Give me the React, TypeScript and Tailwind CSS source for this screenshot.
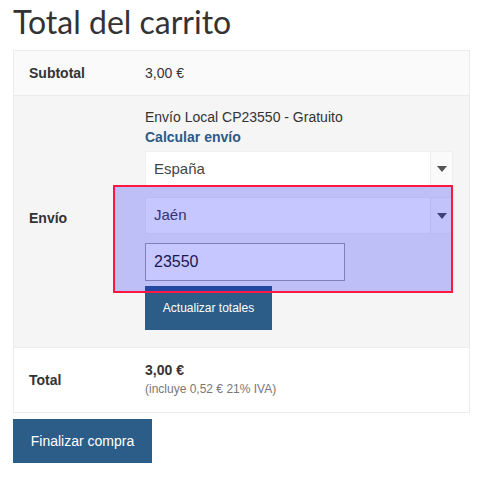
function Caret() {
	return (
		<div className="w-[22px] self-stretch flex items-center justify-center border-l border-[#ececec] bg-[#fafafa]">
			<svg width="10" height="6" viewBox="0 0 10 6">
				<path d="M0 0 L10 0 L5 6 Z" fill="#555" />
			</svg>
		</div>
	)
}

function App() {
	return (
		<div className="relative w-[483px] h-[481px] bg-white px-[13px] font-['Liberation_Sans',Arial,sans-serif] text-[#333]">
			<h2 className="font-['Lato',sans-serif] font-normal text-[32px] leading-[40px] text-[#333] pt-[2px] h-[50px]">
				Total del carrito
			</h2>

			<div className="w-[457px] border border-[#ececec] text-[14px]">
				<div className="flex items-center h-[45px] bg-[#fafafa] border-b border-[#ececec]">
					<div className="w-[115px] pl-[15px] font-bold">Subtotal</div>
					<div className="pl-4">3,00 €</div>
				</div>

				<div className="flex items-center bg-[#f5f5f5] border-b border-[#ececec] pt-[11px] pb-[17px]">
					<div className="w-[115px] pl-[15px] font-bold">Envío</div>
					<div className="pl-4 flex-1 pr-4">
						<div className="leading-[20px]">Envío Local CP23550 - Gratuito</div>
						<div className="leading-[20px] font-bold text-[#2c5a86]">Calcular envío</div>
						<div className="mt-[4px] flex items-center h-[36px] bg-white border border-[#f0f0f0]">
							<div className="flex-1 pl-[8px] text-[15px] text-[#444]">España</div>
							<Caret />
						</div>
						<div className="mt-[10px] flex items-center h-[37px] bg-white border border-[#f0f0f0]">
							<div className="flex-1 pl-[8px] text-[15px] text-[#444]">Jaén</div>
							<Caret />
						</div>
						<div className="mt-[9px] w-[200px] h-[38px] bg-white border border-[#a5a5a5] flex items-center pl-[8px] text-[16px] text-[#222]">
							23550
						</div>
						<div className="mt-[5px] w-[127px] h-[44px] bg-[#2c5d88] text-white text-[12px] flex items-center justify-center">
							Actualizar totales
						</div>
					</div>
				</div>

				<div className="flex items-center h-[64px] bg-white">
					<div className="w-[115px] pl-[15px] font-bold">Total</div>
					<div className="pl-4 -mt-[2px]">
						<div className="font-bold text-[14px] leading-[20px]">3,00 €</div>
						<div className="text-[12px] leading-[18px] text-[#777]">(incluye 0,52 € 21% IVA)</div>
					</div>
				</div>
			</div>

			<button className="mt-[6px] w-[139px] h-[44px] bg-[#2c5d88] text-white text-[14px]">
				Finalizar compra
			</button>

			<div className="absolute left-[113px] top-[185px] w-[340px] h-[108px] border-2 border-[#ff1744] bg-[rgba(0,0,255,0.22)]"></div>
		</div>
	)
}

export default App
